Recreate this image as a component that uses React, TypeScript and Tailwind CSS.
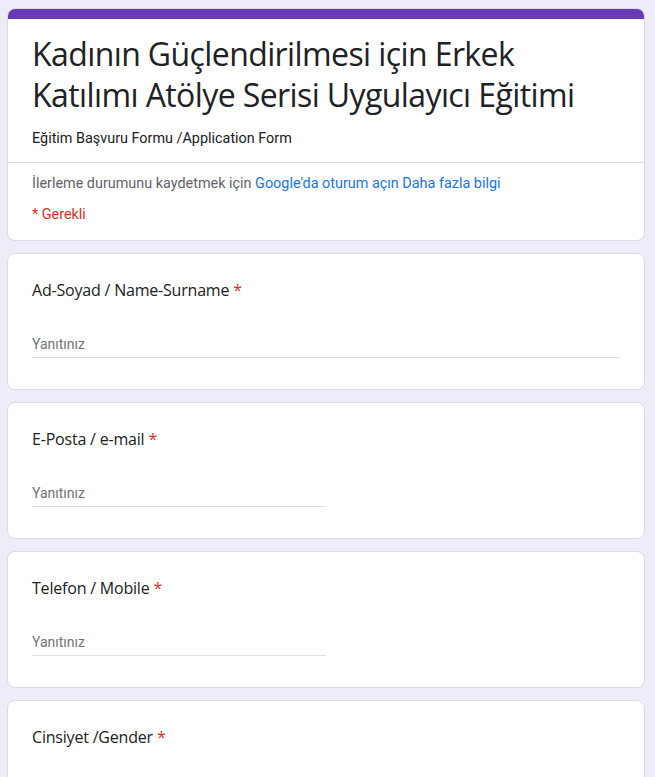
import React from "react";

const fields = [
  { label: "Ad-Soyad / Name-Surname", full: true },
  { label: "E-Posta / e-mail", full: false },
  { label: "Telefon / Mobile", full: false },
];

function Required() {
  return <span className="text-[#d93025] ml-1">*</span>;
}

function FieldCard({ label, full }: { label: string; full: boolean }) {
  return (
    <div className="bg-white border border-[#dadce0] rounded-lg px-6 pt-6 pb-[31px]">
      <div className="text-[16px] leading-6 text-[#202124] font-['Open_Sans',sans-serif] tracking-[-0.2px]">
        {label}
        <Required />
      </div>
      <div
        className={
          "mt-8 border-b border-[#e0e0e0] pb-[3px] text-[14px] leading-5 text-[#70757a] font-['Roboto',sans-serif] " +
          (full ? "w-full" : "w-1/2")
        }
      >
        Yanıtınız
      </div>
    </div>
  );
}

export default function App() {
  return (
    <div className="min-h-screen bg-[#f0ebf8] pt-2 pl-[7px] pr-[10px] pb-6 font-['Roboto',sans-serif]">
      <div className="flex flex-col gap-3">
        <div className="bg-white rounded-lg border border-[#dadce0] overflow-hidden">
          <div className="h-[10px] bg-[#673ab7]" />
          <div className="px-6 pt-[14px] pb-[13px] border-b border-[#dadce0]">
            <h1 className="text-[32px] leading-[41px] text-[#202124] font-['Open_Sans',sans-serif] tracking-[-0.6px]">
              Kadının Güçlendirilmesi için Erkek
              <br />
              Katılımı Atölye Serisi Uygulayıcı Eğitimi
            </h1>
            <p className="mt-[14px] text-[14.4px] leading-5 text-[#202124]">
              Eğitim Başvuru Formu /Application Form
            </p>
          </div>
          <div className="px-6 pt-[11px] pb-[15px]">
            <p className="text-[14.4px] leading-5 text-[#5f6368]">
              İlerleme durumunu kaydetmek için{" "}
              <span className="text-[#1a73e8]">Google'da oturum açın</span>{" "}
              <span className="text-[#1a73e8]">Daha fazla bilgi</span>
            </p>
            <p className="mt-[11px] text-[14.4px] leading-5 text-[#d93025]">* Gerekli</p>
          </div>
        </div>

        {fields.map((f) => (
          <FieldCard key={f.label} label={f.label} full={f.full} />
        ))}

        <div className="bg-white border border-[#dadce0] rounded-lg px-6 pt-6 pb-8 h-[140px]">
          <div className="text-[16px] leading-6 text-[#202124] font-['Open_Sans',sans-serif] tracking-[-0.2px]">
            Cinsiyet /Gender
            <Required />
          </div>
        </div>
      </div>
    </div>
  );
}
